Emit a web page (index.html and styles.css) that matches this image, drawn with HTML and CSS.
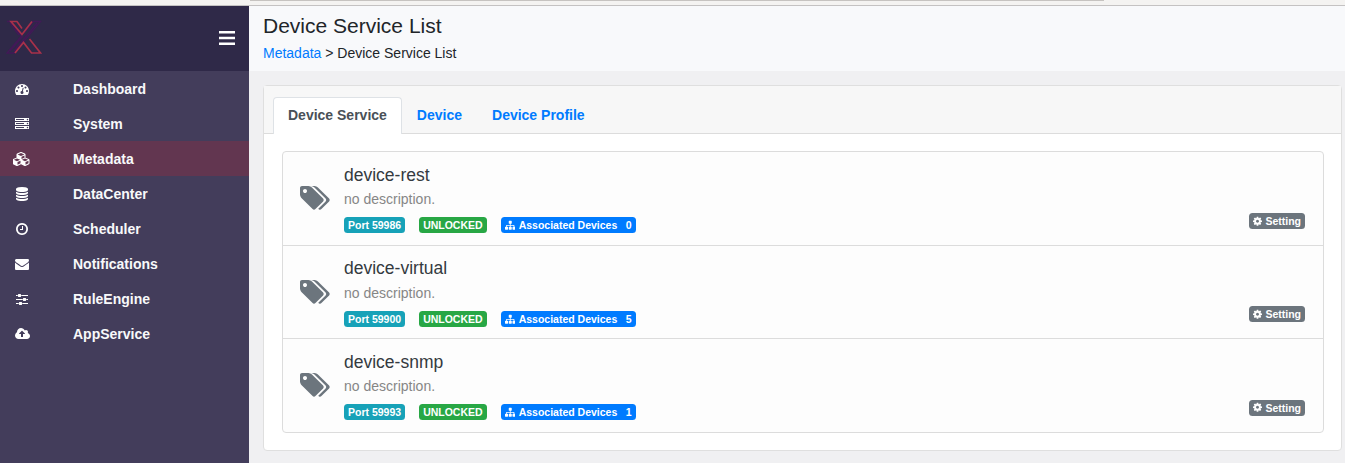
FILE: index.html
```
<!DOCTYPE html>
<html lang="en">
<head>
<meta charset="utf-8">
<title>Device Service List</title>
<link rel="stylesheet" href="styles.css">
</head>
<body>
<svg class="sprite" aria-hidden="true">
<symbol id="tachometer" viewBox="0 0 1792 1792"><path d="M384 1152q0-53-37.5-90.5t-90.5-37.5-90.5 37.5-37.5 90.5 37.5 90.5 90.5 37.5 90.5-37.5 37.5-90.5zm192-448q0-53-37.5-90.5t-90.5-37.5-90.5 37.5-37.5 90.5 37.5 90.5 90.5 37.5 90.5-37.5 37.5-90.5zm428 481l101-382q6-26-7.5-48.5t-38.5-29.5-48 6.5-30 39.5l-101 382q-60 5-107 43.5t-63 98.5q-20 77 20 146t117 89 146-20 89-117q16-60-6-117t-72-91zm660-33q0-53-37.5-90.5t-90.5-37.5-90.5 37.5-37.5 90.5 37.5 90.5 90.5 37.5 90.5-37.5 37.5-90.5zm-640-640q0-53-37.5-90.5t-90.5-37.5-90.5 37.5-37.5 90.5 37.5 90.5 90.5 37.5 90.5-37.5 37.5-90.5zm448 192q0-53-37.5-90.5t-90.5-37.5-90.5 37.5-37.5 90.5 37.5 90.5 90.5 37.5 90.5-37.5 37.5-90.5zm320 448q0 261-141 483-19 29-54 29h-1402q-35 0-54-29-141-221-141-483 0-182 71-348t191-286 286-191 348-71 348 71 286 191 191 286 71 348z"/></symbol>
<symbol id="server" viewBox="0 0 1792 1792"><path d="M128 1408h1024v-128h-1024v128zm0-512h1024v-128h-1024v128zm1568 448q0-40-28-68t-68-28-68 28-28 68 28 68 68 28 68-28 28-68zm-1568-960h1024v-128h-1024v128zm1568 448q0-40-28-68t-68-28-68 28-28 68 28 68 68 28 68-28 28-68zm0-512q0-40-28-68t-68-28-68 28-28 68 28 68 68 28 68-28 28-68zm96 832v384h-1792v-384h1792zm0-512v384h-1792v-384h1792zm0-512v384h-1792v-384h1792z"/></symbol>
<symbol id="cubes" viewBox="0 0 2176 1792"><path d="M576 1632l384-192v-314l-384 164v342zm-64-454l404-173-404-173-404 173zm1088 454l384-192v-314l-384 164v342zm-64-454l404-173-404-173-404 173zm-448-293l384-165v-266l-384 164v267zm-64-379l441-189-441-189-441 189zm1088 518v416q0 36-19 67t-52 47l-448 224q-25 14-57 14t-57-14l-448-224q-4-2-7-4-2 2-7 4l-448 224q-25 14-57 14t-57-14l-448-224q-33-16-52-47t-19-67v-416q0-38 21.5-70t56.5-48l434-186v-400q0-38 21.5-70t56.5-48l448-192q23-10 50-10t50 10l448 192q35 16 56.5 48t21.5 70v400l434 186q36 16 57 48t21 70z"/></symbol>
<symbol id="database" viewBox="128 0 1536 1792"><path d="M896 768q237 0 443-43t325-127v170q0 69-103 128t-280 93.5-385 34.5-385-34.5-280-93.5-103-128v-170q119 84 325 127t443 43zm0 768q237 0 443-43t325-127v170q0 69-103 128t-280 93.5-385 34.5-385-34.5-280-93.5-103-128v-170q119 84 325 127t443 43zm0-384q237 0 443-43t325-127v170q0 69-103 128t-280 93.5-385 34.5-385-34.5-280-93.5-103-128v-170q119 84 325 127t443 43zm0-1152q208 0 385 34.5t280 93.5 103 128v128q0 69-103 128t-280 93.5-385 34.5-385-34.5-280-93.5-103-128v-128q0-69 103-128t280-93.5 385-34.5z"/></symbol>
<symbol id="clock" viewBox="128 0 1536 1792"><path d="M1024 544v448q0 14-9 23t-23 9h-320q-14 0-23-9t-9-23v-64q0-14 9-23t23-9h224v-352q0-14 9-23t23-9h64q14 0 23 9t9 23zm416 352q0-148-73-273t-198-198-273-73-273 73-198 198-73 273 73 273 198 198 273 73 273-73 198-198 73-273zm224 0q0 209-103 385.5t-279.5 279.5-385.5 103-385.5-103-279.5-279.5-103-385.5 103-385.5 279.5-279.5 385.5-103 385.5 103 279.5 279.5 103 385.5z"/></symbol>
<symbol id="envelope" viewBox="0 0 1792 1792"><path d="M1792 710v794q0 66-47 113t-113 47h-1472q-66 0-113-47t-47-113v-794q44 49 101 87 362 246 497 345 57 42 92.5 65.5t94.5 48 110 24.5h2q51 0 110-24.5t94.5-48 92.5-65.5q170-123 498-345 57-39 100-87zm0-294q0 79-49 151t-122 123q-376 261-468 325-10 7-42.5 31t-54 38.5-52 32.5-57.5 27-50 9h-2q-23 0-50-9t-57.5-27-52-32.5-54-38.5-42.5-31q-91-64-262-182.5t-205-142.5q-62-42-117-115.5t-55-136.5q0-78 41.5-130t118.5-52h1472q65 0 112.5 47t47.5 113z"/></symbol>
<symbol id="sliders" viewBox="0 0 1536 1792"><path d="M352 1408v128h-352v-128h352zm352-128q26 0 45 19t19 45v256q0 26-19 45t-45 19h-256q-26 0-45-19t-19-45v-256q0-26 19-45t45-19h256zm160-384v128h-864v-128h864zm-640-512v128h-224v-128h224zm1312 1024v128h-736v-128h736zm-960-1152q26 0 45 19t19 45v256q0 26-19 45t-45 19h-256q-26 0-45-19t-19-45v-256q0-26 19-45t45-19h256zm640 512q26 0 45 19t19 45v256q0 26-19 45t-45 19h-256q-26 0-45-19t-19-45v-256q0-26 19-45t45-19h256zm320 128v128h-224v-128h224zm0-512v128h-864v-128h864z"/></symbol>
<symbol id="cloud" viewBox="0 0 1920 1792"><path d="M1280 864q0-14-9-23l-352-352q-9-9-23-9t-23 9l-351 351q-10 12-10 24 0 14 9 23t23 9h224v352q0 13 9.500 22.500t22.500 9.500h192q13 0 22.500-9.500t9.500-22.500v-352h224q13 0 22.500-9.500t9.500-22.500zm640 288q0 159-112.500 271.500t-271.500 112.500h-1088q-185 0-316.500-131.500t-131.500-316.500q0-130 70-240t188-165q-2-30-2-43 0-212 150-362t362-150q156 0 285.500 87t188.500 231q71-62 166-62 106 0 181 75t75 181q0 76-41 138 130 31 213.500 135.500t83.500 238.500z"/></symbol>
<symbol id="tags" viewBox="0 0 1920 1792"><path d="M448 448q0-53-37.500-90.500t-90.500-37.500-90.500 37.500-37.500 90.500 37.500 90.500 90.500 37.500 90.500-37.500 37.500-90.500zm1067 576q0 53-37 90l-491 492q-39 37-91 37-53 0-90-37l-715-716q-38-37-64.500-101t-26.500-117v-416q0-52 38-90t90-38h416q53 0 117 26.500t102 64.500l715 714q37 39 37 91zm384 0q0 53-37 90l-491 492q-39 37-91 37-36 0-59-14t-53-45l470-470q37-37 37-90 0-52-37-91l-715-714q-38-38-102-64.500t-117-26.500h224q53 0 117 26.500t102 64.500l715 714q37 39 37 91z"/></symbol>
<symbol id="sitemap" viewBox="0 0 1792 1792"><path d="M1792 1248v320q0 40-28 68t-68 28h-320q-40 0-68-28t-28-68v-320q0-40 28-68t68-28h96v-192h-512v192h96q40 0 68 28t28 68v320q0 40-28 68t-68 28h-320q-40 0-68-28t-28-68v-320q0-40 28-68t68-28h96v-192h-512v192h96q40 0 68 28t28 68v320q0 40-28 68t-68 28h-320q-40 0-68-28t-28-68v-320q0-40 28-68t68-28h96v-192q0-52 38-90t90-38h512v-192h-96q-40 0-68-28t-28-68v-320q0-40 28-68t68-28h320q40 0 68 28t28 68v320q0 40-28 68t-68 28h-96v192h512q52 0 90 38t38 90v192h96q40 0 68 28t28 68z"/></symbol>
<symbol id="cog" viewBox="128 0 1536 1792"><path d="M1152 896q0-106-75-181t-181-75-181 75-75 181 75 181 181 75 181-75 75-181zm512-109v222q0 12-8 23t-20 13l-185 28q-19 54-39 91 35 50 107 138 10 12 10 25t-9 23q-27 37-99 108t-94 71q-12 0-26-9l-138-108q-44 23-91 38-16 136-29 186-7 28-36 28h-222q-14 0-24.500-8.500t-11.500-21.500l-28-184q-49-16-90-37l-141 107q-10 9-25 9-14 0-25-11-126-114-165-168-7-10-7-23 0-12 8-23 15-21 51-66.500t54-70.500q-27-50-41-99l-183-27q-13-2-21-12.500t-8-23.500v-222q0-12 8-23t19-13l186-28q14-46 39-92-40-57-107-138-10-12-10-24 0-10 9-23 26-36 98.500-107.500t94.500-71.500q13 0 26 10l138 107q44-23 91-38 16-136 29-186 7-28 36-28h222q14 0 24.500 8.500t11.500 21.500l28 184q49 16 90 37l142-107q9-9 24-9 13 0 25 10 129 119 165 170 7 8 7 22 0 12-8 23-15 21-51 66.500t-54 70.500q26 50 41 98l183 28q13 2 21 12.500t8 23.500z"/></symbol>
</svg>
<div class="chrome"><div class="chrome-line"></div></div>
<div class="app">
  <aside class="sidebar">
    <div class="brand">
      <svg class="logo" viewBox="0 0 36 34" fill="none">
        <path class="logo-dark" d="M1 1.500H5L15.500 16L1 33H8L34.500 1.500H27L18 13M4 31L17 16M8 31L31 3M4 3L13 15"/>
        <path class="logo-red" d="M16 8.500L11 1.500H5L16 14.500L26 1.500M9 33L17.500 22.500L25.500 33H34.500L23.500 19"/>
      </svg>
      <svg class="bars" viewBox="0 0 16 14"><path d="M0 0h16v2.500H0zM0 5.750h16v2.500H0zM0 11.500h16v2.500H0z"/></svg>
    </div>
    <nav class="menu">
      <a class="menu-item"><span class="menu-icon"><svg class="icon w14"><use href="#tachometer"/></svg></span>Dashboard</a>
      <a class="menu-item"><span class="menu-icon"><svg class="icon w14"><use href="#server"/></svg></span>System</a>
      <a class="menu-item active"><span class="menu-icon"><svg class="icon w17"><use href="#cubes"/></svg></span>Metadata</a>
      <a class="menu-item"><span class="menu-icon"><svg class="icon w12"><use href="#database"/></svg></span>DataCenter</a>
      <a class="menu-item"><span class="menu-icon"><svg class="icon w12"><use href="#clock"/></svg></span>Scheduler</a>
      <a class="menu-item"><span class="menu-icon"><svg class="icon w14"><use href="#envelope"/></svg></span>Notifications</a>
      <a class="menu-item"><span class="menu-icon"><svg class="icon w12"><use href="#sliders"/></svg></span>RuleEngine</a>
      <a class="menu-item"><span class="menu-icon"><svg class="icon w15"><use href="#cloud"/></svg></span>AppService</a>
    </nav>
  </aside>
  <main class="main">
    <header class="page-head">
      <h1 class="title">Device Service List</h1>
      <div class="crumbs"><a class="link">Metadata</a> &gt; Device Service List</div>
    </header>
    <section class="card">
      <div class="tabs">
        <a class="tab current">Device Service</a>
        <a class="tab">Device</a>
        <a class="tab">Device Profile</a>
      </div>
      <div class="list">
        <article class="item">
          <svg class="tags"><use href="#tags"/></svg>
          <div class="info">
            <h2 class="name">device-rest</h2>
            <p class="desc">no description.</p>
            <div class="badges"><span class="badge teal">Port 59986</span><span class="badge green">UNLOCKED</span><span class="badge blue"><svg class="mini"><use href="#sitemap"/></svg>Associated Devices<span class="count">0</span></span></div>
          </div>
          <span class="badge gray"><svg class="mini cog"><use href="#cog"/></svg>Setting</span>
        </article>
        <article class="item">
          <svg class="tags"><use href="#tags"/></svg>
          <div class="info">
            <h2 class="name">device-virtual</h2>
            <p class="desc">no description.</p>
            <div class="badges"><span class="badge teal">Port 59900</span><span class="badge green">UNLOCKED</span><span class="badge blue"><svg class="mini"><use href="#sitemap"/></svg>Associated Devices<span class="count">5</span></span></div>
          </div>
          <span class="badge gray"><svg class="mini cog"><use href="#cog"/></svg>Setting</span>
        </article>
        <article class="item">
          <svg class="tags"><use href="#tags"/></svg>
          <div class="info">
            <h2 class="name">device-snmp</h2>
            <p class="desc">no description.</p>
            <div class="badges"><span class="badge teal">Port 59993</span><span class="badge green">UNLOCKED</span><span class="badge blue"><svg class="mini"><use href="#sitemap"/></svg>Associated Devices<span class="count">1</span></span></div>
          </div>
          <span class="badge gray"><svg class="mini cog"><use href="#cog"/></svg>Setting</span>
        </article>
      </div>
    </section>
  </main>
</div>
</body>
</html>
```
FILE: styles.css
```
* { box-sizing: border-box; }
body {
  margin: 0;
  height: 463px;
  overflow: hidden;
  display: flex;
  flex-direction: column;
  font: 14px/21px "Liberation Sans", Arial, sans-serif;
  color: #212529;
  background: #f0f0f2;
}
h1, h2, p { margin: 0; font-weight: 400; }
.sprite { display: none; }
.chrome { flex: none; height: 6px; background: #f4f3f1; border-bottom: 1px solid #c4c2c2; }
.chrome-line { width: 854px; height: 1px; margin-left: 250px; background: #c6c3c0; }
.app { display: flex; flex: 1; min-height: 0; }

.sidebar { width: 249px; flex: none; background: #433d5b; }
.brand {
  height: 65px;
  padding: 0 14px 0 6px;
  display: flex;
  align-items: center;
  justify-content: space-between;
  background: #2f2948;
}
.logo { width: 36px; height: 34px; margin-bottom: 3px; }
.logo-dark { stroke: #421957; stroke-width: 1.3; }
.logo-red { stroke: #a8314a; stroke-width: 1.7; }
.bars { width: 16px; height: 14px; margin-bottom: 1px; fill: #fff; }
.menu { display: flex; flex-direction: column; }
.menu-item { height: 35px; padding-top: 1px; display: flex; align-items: center; font-weight: 700; color: #f8f9fa; }
.menu-item.active { background: #623650; }
.menu-icon { width: 44px; margin-right: 29px; padding-bottom: 1px; display: flex; justify-content: center; }
.icon { height: 14px; fill: #fff; }
.w12 { width: 12px; }
.w14 { width: 14px; }
.w15 { width: 15px; }
.w17 { width: 17px; margin-right: 1px; }

.main { flex: 1; min-width: 0; }
.page-head { height: 65px; padding: 7px 14px; background: #f8f9fb; }
.title { font-size: 21px; line-height: 25px; }
.crumbs { margin-top: 5px; }
.link { color: #007bff; }
.card {
  height: 366px;
  margin: 14px 3px 0 14px;
  border: 1px solid #dfdfdf;
  border-radius: 4px;
  background: #fff;
}
.tabs {
  height: 48px;
  padding: 11px 9px 0;
  display: flex;
  background: #f7f7f7;
  border-bottom: 1px solid #dcdcdc;
}
.tab {
  height: 37px;
  padding: 7px 14px;
  border: 1px solid transparent;
  border-bottom: 0;
  border-radius: 4px 4px 0 0;
  font-weight: 700;
  color: #007bff;
}
.tab.current { color: #495057; background: #fff; border-color: #dee2e6; }

.list { margin: 17px 17px 0 18px; border: 1px solid #dcdcdc; border-radius: 4px; background: #fdfdfd; }
.item { height: 93.2px; padding: 0 18px 0 17px; display: flex; align-items: center; }
.item + .item { border-top: 1px solid #dcdcdc; padding-top: .4px; }
.tags { width: 30px; height: 28px; margin: 0 14px 1px 0; fill: #6c757d; }
.info { flex: 1; }
.name { font-size: 17.5px; line-height: 21px; color: #343a40; }
.desc { margin-top: 3.2px; color: #868686; }
.badges { display: flex; gap: 14px; margin-top: 6.95px; }
.badge {
  height: 16px;
  padding: 0 4px;
  display: flex;
  align-items: center;
  border-radius: 3.5px;
  font-size: 10.5px;
  font-weight: 700;
  line-height: 16px;
  color: #fff;
}
.teal { background: #17a2b8; }
.green { background: #28a745; }
.blue { background: #007bff; }
.gray { background: #6c757d; align-self: flex-end; margin-bottom: 15.9px; }
.mini { width: 10.5px; height: 10.5px; margin: 1px 3.5px 0 0; fill: #fff; }
.mini.cog { width: 9px; margin: 0 3px 0 0; }
.count { margin-left: 8.5px; }
```
